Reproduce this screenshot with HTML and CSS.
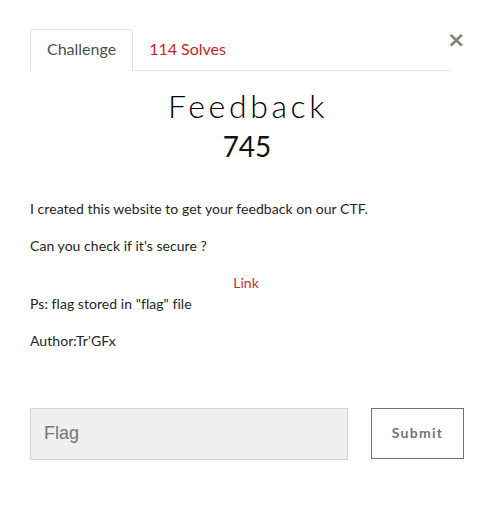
FILE: index.html
```html
<!DOCTYPE html>
<html>
<head>
<meta charset="utf-8">
<link rel="stylesheet" href="styles.css">
</head>
<body>
<div class="modal">
  <div class="header">
    <ul class="tabs">
      <li class="tab active">Challenge</li>
      <li class="tab solves">114 Solves</li>
    </ul>
    <button class="close" type="button">&times;</button>
  </div>
  <h2 class="title">Feedback</h2>
  <h3 class="value">745</h3>
  <div class="desc">
    <p>I created this website to get your feedback on our CTF.</p>
    <p>Can you check if it's secure ?</p>
    <div class="link-row"><a class="link" href="#">Link</a></div>
    <p>Ps: flag stored in "flag" file</p>
    <p>Author:Tr'GFx</p>
  </div>
  <form class="submit-row">
    <input class="flag" type="text" placeholder="Flag">
    <button class="submit" type="button">Submit</button>
  </form>
</div>
</body>
</html>
```
FILE: styles.css
```css
html, body {
  margin: 0;
  padding: 0;
  background: #fff;
}
body {
  font-family: Lato, "Noto Sans", sans-serif;
  color: #212529;
  width: 495px;
}
.modal {
  padding: 29px 31px 0 30px;
}
.header {
  display: flex;
  align-items: flex-start;
}
.tabs {
  list-style: none;
  margin: 0;
  padding: 0;
  display: flex;
  width: 420px;
  flex: 0 0 420px;
  border-bottom: 1px solid #dee2e6;
}
.tab {
  font-size: 16px;
  line-height: 24px;
  padding: 7px 16px 9px;
  border: 1px solid transparent;
  border-top-left-radius: 4px;
  border-top-right-radius: 4px;
  margin-bottom: -1px;
}
.tab.active {
  color: #495057;
  border-color: #dee2e6 #dee2e6 #fff;
  background: #fff;
}
.tab.solves {
  color: #cc1e23;
  border-left: 0;
}
.close {
  padding: 0;
  border: 0;
  background: none;
  font-family: "DejaVu Sans", sans-serif;
  font-size: 22px;
  font-weight: 700;
  line-height: 20px;
  color: #7f7f7f;
  height: 22px;
  margin: 0 0 0 -3px;
}
.title {
  margin: 16px 0 5px;
  text-align: center;
  font-size: 32px;
  font-weight: 300;
  line-height: 1.2;
  letter-spacing: 3.6px;
  text-indent: 2px;
  color: #000;
}
.value {
  margin: 0;
  text-align: center;
  font-size: 28px;
  font-weight: 400;
  line-height: 1.2;
  color: #111;
}
.desc {
  margin-top: 34px;
  font-size: 14px;
  line-height: 21px;
  letter-spacing: 0.05px;
}
.desc p {
  margin: 0 0 16px;
}
.link-row {
  text-align: center;
  padding-right: 2px;
}
.link {
  color: #c82e2e;
  text-decoration: none;
}
.submit-row {
  margin-top: 57px;
  display: flex;
  align-items: flex-start;
}
.flag {
  box-sizing: border-box;
  width: 318px;
  height: 52px;
  margin: 0;
  padding: 0 13px;
  background: #efefef;
  border: 1px solid #d2d4d8;
  border-radius: 0;
  font-family: "Liberation Sans", Arial, sans-serif;
  font-size: 18px;
  color: #495057;
  outline: none;
}
.flag::placeholder {
  color: #72777d;
}
.submit {
  box-sizing: border-box;
  margin-left: 23px;
  width: 93px;
  height: 51px;
  background: #fff;
  border: 1px solid #6c757d;
  border-radius: 0;
  font-family: Lato, sans-serif;
  font-size: 14px;
  font-weight: 700;
  letter-spacing: 1.3px;
  color: #6c757d;
  padding: 0 0 2px;
}
```
